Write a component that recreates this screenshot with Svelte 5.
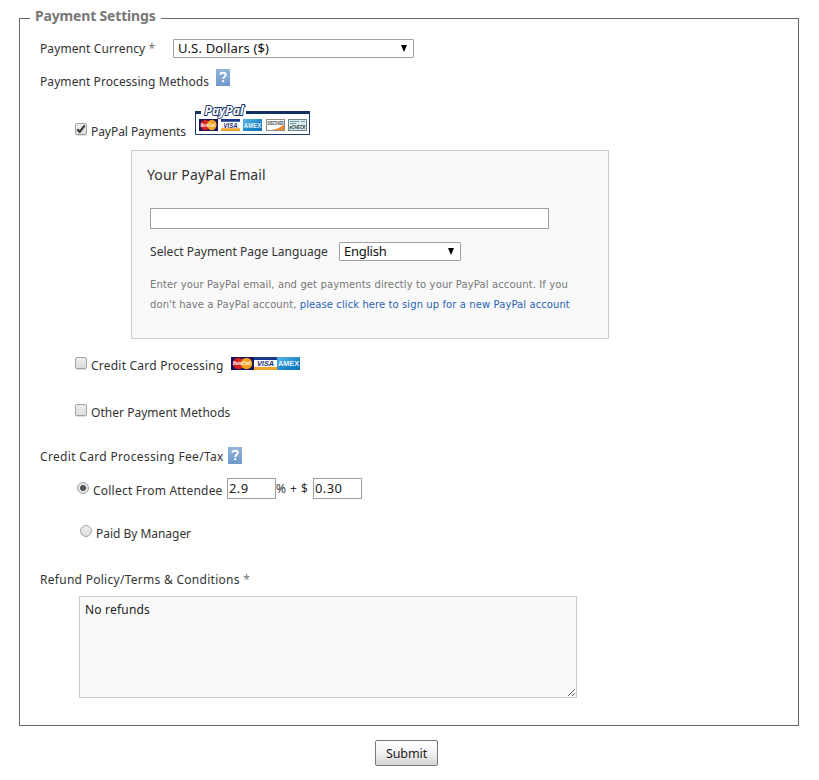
<script>
  let currency = $state('U.S. Dollars ($)');
  let language = $state('English');
  let email = $state('');
  let percent = $state('2.9');
  let flat = $state('0.30');
  let policy = $state('No refunds');
</script>

{#snippet help()}
  <svg width="14" height="17" viewBox="0 0 14 17">
    <defs>
      <linearGradient id="helpfill" x1="0" y1="0" x2="0" y2="1">
        <stop offset="0" stop-color="#92b5db" /><stop offset="1" stop-color="#6f98c9" />
      </linearGradient>
    </defs>
    <rect width="14" height="17" fill="url(#helpfill)" />
    <path d="M4.300 5.800C4.400 4.400 5.500 3.700 7 3.700c1.700 0 2.800.8 2.800 2.100 0 1.900-2.600 1.900-2.600 4.100" fill="none" stroke="#fff" stroke-width="1.900" />
    <rect x="6.200" y="11.200" width="2" height="2" fill="#fff" />
  </svg>
{/snippet}

{#snippet mastercard(w, h)}
  <svg width={w} height={h} viewBox="0 0 23 13" preserveAspectRatio="none">
    <rect width="23" height="13" fill="#15135a" />
    <circle cx="7.500" cy="6.500" r="5.800" fill="#d4201f" />
    <circle cx="15.500" cy="6.500" r="5.800" fill="#f5a01e" />
    <text x="2" y="8.300" textLength="17.500" lengthAdjust="spacingAndGlyphs" class="mark" font-size="5" fill="#fff">MasterCard</text>
  </svg>
{/snippet}

{#snippet visa(w, h)}
  <svg width={w} height={h} viewBox="0 0 23 13" preserveAspectRatio="none">
    <rect width="23" height="13" fill="#fff" />
    <rect width="23" height="3" fill="#1b3a8c" />
    <rect y="10" width="23" height="3" fill="#f0a22c" />
    <text x="3" y="9.300" textLength="17" lengthAdjust="spacingAndGlyphs" class="mark" font-size="7.500" fill="#1c2c78">VISA</text>
  </svg>
{/snippet}

{#snippet amex(w, h)}
  <svg width={w} height={h} viewBox="0 0 23 13" preserveAspectRatio="none">
    <defs>
      <linearGradient id="amexfill" x1="0" y1="0" x2="1" y2="1">
        <stop offset="0" stop-color="#5cb8e6" /><stop offset=".6" stop-color="#1c86c8" /><stop offset="1" stop-color="#1272b5" />
      </linearGradient>
    </defs>
    <rect width="23" height="13" fill="url(#amexfill)" />
    <text x="1" y="9.300" textLength="21" lengthAdjust="spacingAndGlyphs" class="amex" font-size="7.500" fill="#e4f4fc">AMEX</text>
  </svg>
{/snippet}

<form onsubmit={(e) => e.preventDefault()}>
  <fieldset>
    <legend>Payment Settings</legend>

    <div class="row currency">
      <span class="label t-currency">Payment Currency <i>*</i></span>
      <button type="button" class="select wide"><span class="t-usd">{currency}</span><span class="arrow"></span></button>
    </div>

    <div class="row methods">
      <span class="label t-methods">Payment Processing Methods</span>
      <span class="help">{@render help()}</span>
    </div>

    <div class="row option paypal">
      <span class="check">
        <svg width="12" height="12" viewBox="0 0 12 12"><path d="M2.300 6.200 4.700 8.800 9.700 2.300" fill="none" stroke="#3b3b3b" stroke-width="2.200" /></svg>
      </span>
      <span class="label t-paypal">PayPal Payments</span>
      <svg class="logo" width="115" height="32" viewBox="0 0 115 32">
        <path d="M.5 9.500V31.500H114.500V9.500" fill="#fff" stroke="#1c3a6e" />
        <path d="M0 9.500H6M51 9.500H115" stroke="#123263" stroke-width="3" />
        <text x="9.500" y="11.500" textLength="39" lengthAdjust="spacingAndGlyphs" class="pp">PayPal</text>
        <path d="M49 3h2" stroke="#123263" />
        <g transform="translate(4 16)">{@render mastercard(19, 12)}</g>
        <g transform="translate(26 16)">{@render visa(19, 12)}</g>
        <g transform="translate(48 16)">{@render amex(19, 12)}</g>
        <g transform="translate(71 16)">
          <rect x=".5" y=".5" width="18" height="11" fill="#fff" stroke="#8c8c8c" />
          <path d="M18 5v6H5Q14 10 18 5" fill="#f08a2c" />
          <text x="1.500" y="6.300" textLength="16" lengthAdjust="spacingAndGlyphs" class="mark" font-size="5" fill="#333">DISCOVER</text>
        </g>
        <g transform="translate(93 16)">
          <rect x=".5" y=".5" width="18" height="11" fill="#d5eaec" stroke="#6c868c" />
          <path d="M2 2.500h9M2 4.500h6M13 2.500h4" stroke="#7f9da3" />
          <text x="1.500" y="10.300" textLength="16" lengthAdjust="spacingAndGlyphs" class="mark" font-size="5.500" fill="#333">eCHECK</text>
        </g>
      </svg>
    </div>

    <div class="panel">
      <div class="title">Your PayPal Email</div>
      <input class="email" type="text" bind:value={email} />
      <div class="lang">
        <span class="label t-lang">Select Payment Page Language</span>
        <button type="button" class="select narrow"><span class="t-eng">{language}</span><span class="arrow"></span></button>
      </div>
      <p>
        <span>Enter your PayPal email, and get payments directly to your PayPal account. If you</span><br />
        <span class="second">don't have a PayPal account, <a href="#signup">please click here to sign up for a new PayPal account</a></span>
      </p>
    </div>

    <div class="row option">
      <span class="check"></span>
      <span class="label t-credit">Credit Card Processing</span>
      <span class="cards">{@render mastercard(23, 13)}{@render visa(23, 13)}{@render amex(23, 13)}</span>
    </div>

    <div class="row option other">
      <span class="check"></span>
      <span class="label t-other">Other Payment Methods</span>
    </div>

    <div class="row fee">
      <span class="label t-fee">Credit Card Processing Fee/Tax</span>
      <span class="help">{@render help()}</span>
    </div>

    <div class="row collect">
      <span class="radio on"></span>
      <span class="label t-collect">Collect From Attendee</span>
      <input class="num" type="text" bind:value={percent} />
      <span class="label plus">% + $</span>
      <input class="num" type="text" bind:value={flat} />
    </div>

    <div class="row manager">
      <span class="radio"></span>
      <span class="label t-manager">Paid By Manager</span>
    </div>

    <div class="row refund">
      <span class="label t-refund">Refund Policy/Terms &amp; Conditions <i>*</i></span>
    </div>
    <textarea bind:value={policy}></textarea>
  </fieldset>

  <button class="submit" type="submit">Submit</button>
</form>

<style>
  :global(body) { background: #fff; }
  * { box-sizing: border-box; }
  form {
    height: 780px;
    padding: 6px 20px 0 19px;
    font-family: "Noto Sans", "Open Sans", sans-serif;
    font-size: 12px;
    line-height: 20px;
    color: #333;
    overflow: hidden;
  }
  fieldset {
    height: 720px;
    margin: 0;
    padding: 0;
    border: 1px solid #666;
    min-width: 0;
  }
  legend {
    display: block;
    height: 24px;
    width: 131px;
    margin-left: 10px;
    padding: 0 0 0 5px;
    line-height: 19px;
    font-size: 14px;
    font-weight: 700;
    letter-spacing: -.17px;
    color: #777;
    white-space: nowrap;
  }
  svg { overflow: visible; }
  .row { display: flex; align-items: flex-start; padding-left: 20px; height: 48px; white-space: nowrap; }
  .label { white-space: nowrap; flex: none; }
  i { font-style: normal; color: #777; }
  .help svg, .cards svg { display: block; flex: none; }

  .t-currency { letter-spacing: .1px; }
  .t-methods { letter-spacing: .08px; }
  .t-paypal { letter-spacing: -.06px; }
  .t-lang { letter-spacing: .04px; }
  .t-credit { letter-spacing: .22px; }
  .t-other { letter-spacing: .03px; }
  .t-fee { letter-spacing: .33px; }
  .t-collect { letter-spacing: .22px; }
  .t-manager { letter-spacing: -.03px; }
  .t-refund { letter-spacing: .28px; }
  .t-usd { letter-spacing: .18px; }
  .t-eng { letter-spacing: -.25px; }

  .currency { height: 38px; }
  .currency .label { width: 133px; margin-top: 9px; }
  .select {
    display: flex;
    align-items: center;
    justify-content: space-between;
    height: 19px;
    margin: 9px 0 0;
    padding: 0 6px 0 4px;
    border: 1px solid #a0a0a0;
    border-radius: 1px;
    background: #fff;
    color: #111;
    font: 13px/17px "Noto Sans", "Open Sans", sans-serif;
    flex: none;
  }
  .arrow { border: solid transparent; border-width: 7px 3.5px 0; border-top-color: #000; margin-top: -1px; }
  .wide { width: 241px; }
  .narrow { width: 122px; margin: 0; }

  .methods { height: 34px; }
  .methods .label { width: 176px; margin-top: 4px; }
  .methods .help { margin-top: 1px; }

  .option { padding-left: 55px; }
  .check {
    width: 12px;
    height: 12px;
    margin: 18px 4px 0 0;
    border: 1px solid #a3a3a3;
    border-radius: 2px;
    background: linear-gradient(#eee, #dcdcdc);
    box-shadow: 0 1px 1px #ddd;
    flex: none;
  }
  .check svg { display: block; margin: -1px; }
  .option .label { margin-top: 17px; }
  .other .check { margin-top: 17px; }
  .other .label { margin-top: 16px; }
  .paypal .check { margin-top: 21px; }
  .paypal .label { width: 104px; margin-top: 20px; }
  .logo { display: block; flex: none; margin-top: 1px; }
  .mark, .amex { font-family: "Liberation Sans", sans-serif; font-weight: 700; font-style: italic; }
  .amex { font-style: normal; }
  .pp {
    font: italic 700 12.500px "Open Sans", sans-serif;
    fill: #fff;
    stroke: #17356b;
    stroke-width: 1.8px;
    paint-order: stroke;
  }

  .panel {
    width: 478px;
    height: 189px;
    margin-left: 111px;
    padding: 14px 0 0 18px;
    border: 1px solid #ccc;
    background: #f9f9f9;
  }
  .title { height: 43px; margin-left: -3px; font-size: 14px; letter-spacing: .12px; }
  input {
    display: block;
    height: 21px;
    margin: 0;
    padding: 0 1px 2px;
    border: 1px solid #a0a0a0;
    background: #fff;
    color: #222;
    font: 13px/17px "Noto Sans", "Open Sans", sans-serif;
    letter-spacing: .4px;
    outline: 0;
    flex: none;
  }
  .email { width: 399px; }
  .lang { display: flex; height: 33px; margin-top: 13px; }
  .lang .label { width: 189px; }
  p { margin: 0; font: 10px/20px "DejaVu Sans", sans-serif; letter-spacing: .12px; color: #777; white-space: nowrap; }
  .second { letter-spacing: .09px; }
  a { color: #2a62b5; text-decoration: none; }

  .option .t-credit { width: 140px; }
  .cards { display: flex; margin-top: 18px; }

  .fee { height: 39px; }
  .fee .label { width: 188px; margin-top: 12px; }
  .fee .help { margin-top: 12px; }

  .radio {
    width: 12px;
    height: 12px;
    margin: 8px 4px 0 0;
    border: 1px solid #a3a3a3;
    border-radius: 50%;
    background: linear-gradient(#eee, #dcdcdc);
    flex: none;
  }
  .on { background: radial-gradient(circle, #555 0 2.6px, #e6e6e6 3.4px); }
  .collect { height: 40px; padding-left: 57px; }
  .collect .label { width: 134px; margin-top: 7px; }
  .num { width: 49px; margin-top: 4px; }
  .collect .plus { width: 37px; margin-top: 5px; letter-spacing: .5px; }
  .manager { height: 42px; padding-left: 60px; }
  .manager .radio { margin-top: 11px; }
  .manager .label { margin-top: 10px; }
  .refund { height: 40px; }
  .refund .label { margin-top: 14px; }
  textarea {
    display: block;
    width: 498px;
    height: 102px;
    margin: 0 0 0 59px;
    padding: 3px 5px;
    border: 1px solid #ccc;
    background: #f9f9f9;
    color: #222;
    font: 12px/19px "Noto Sans", "Open Sans", sans-serif;
    letter-spacing: .2px;
    resize: both;
    outline: 0;
  }
  .submit {
    display: block;
    width: 63px;
    height: 26px;
    margin: 14px 0 0 356px;
    padding: 2px 0 0;
    border: 1px solid #777;
    border-radius: 2px;
    background: linear-gradient(#fff, #f4f4f4 45%, #d4d4d4);
    color: #222;
    font: 12.500px/22px "Noto Sans", "Open Sans", sans-serif;
    letter-spacing: -.1px;
  }
</style>
